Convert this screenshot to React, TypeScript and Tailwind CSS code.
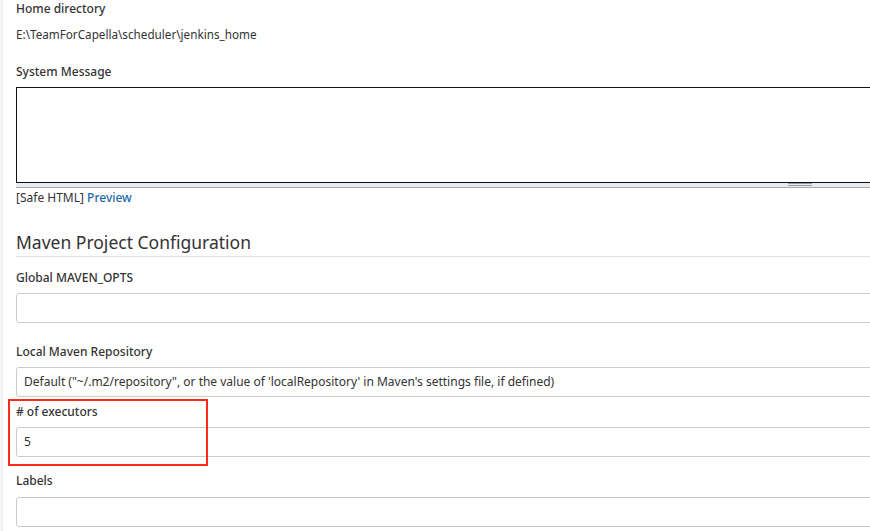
import React from 'react';

const font = { fontFamily: '"Noto Sans", "Open Sans", Arial, sans-serif' };

/** 表单项标题 */
const Label: React.FC<{ children: React.ReactNode; className?: string }> = ({ children, className = '' }) => (
  <div className={`text-[12px] font-medium text-[#333] leading-[18px] ${className}`}>{children}</div>
);

/** 单行输入框 */
const Field: React.FC<{ value?: string; className?: string }> = ({ value, className = '' }) => (
  <div
    className={`h-[30px] -mr-2 border border-[#ccc] rounded-[3px] bg-white flex items-center pl-[7px] text-[12px] text-[#333] ${className}`}
  >
    {value}
  </div>
);

export default function App() {
  return (
    <div className="flex w-[870px] h-[531px] overflow-hidden bg-white" style={font}>
      {/* 左侧细条 */}
      <div className="w-[3px] flex-shrink-0 bg-[#f7f7f7] border-r border-[#ececec]" />

      <div className="flex-1 min-w-0 pl-[13px] overflow-hidden">
        <Label>Home directory</Label>
        <div className="mt-[7px] text-[11.7px] text-[#333] leading-[18px]">
          E:\TeamForCapella\scheduler\jenkins_home
        </div>

        <Label className="mt-[20px]">System Message</Label>
        {/* 文本域 */}
        <div className="mt-[6px] -mr-2">
          <div className="h-[96px] border border-[#111] border-r-0 bg-white" />
          <div className="h-[5px] bg-[#e7edf0] border-b border-[#a6aeb3] relative">
            <div className="absolute left-[772px] top-[0px] w-[24px] h-[1px] bg-[#999]" />
            <div className="absolute left-[772px] top-[2px] w-[24px] h-[1px] bg-[#999]" />
          </div>
        </div>
        <div className="mt-[1px] text-[12px] leading-[18px] text-[#333]">
          [Safe HTML] <span className="text-[#1f6aa8] font-medium">Preview</span>
        </div>

        {/* 分区标题 */}
        <div className="mt-[23px] -mr-2 border-b border-[#e1e1e1] pb-[2px]">
          <div className="text-[17.5px] leading-[24px] text-[#333]">Maven Project Configuration</div>
        </div>

        <Label className="mt-[12px]">Global MAVEN_OPTS</Label>
        <Field className="mt-[6px]" />

        <Label className="mt-[20px]">Local Maven Repository</Label>
        <Field
          className="mt-[6px]"
          value={'Default ("~/.m2/repository", or the value of \'localRepository\' in Maven\'s settings file, if defined)'}
        />

        {/* 红框标注区 */}
        <div className="mt-[2px] -ml-[8px] flex">
          <div className="relative flex-1 pl-[8px] pt-[4px] pb-[9px]">
            <div className="absolute left-0 top-0 w-[200px] h-[67px] border-2 border-[#ff2a14] pointer-events-none" />
            <Label>{'# of executors'}</Label>
            <Field className="mt-[6px]" value="5" />
          </div>
        </div>

        <Label className="mt-[6px]">Labels</Label>
        <Field className="mt-[7px]" />
      </div>
    </div>
  );
}
